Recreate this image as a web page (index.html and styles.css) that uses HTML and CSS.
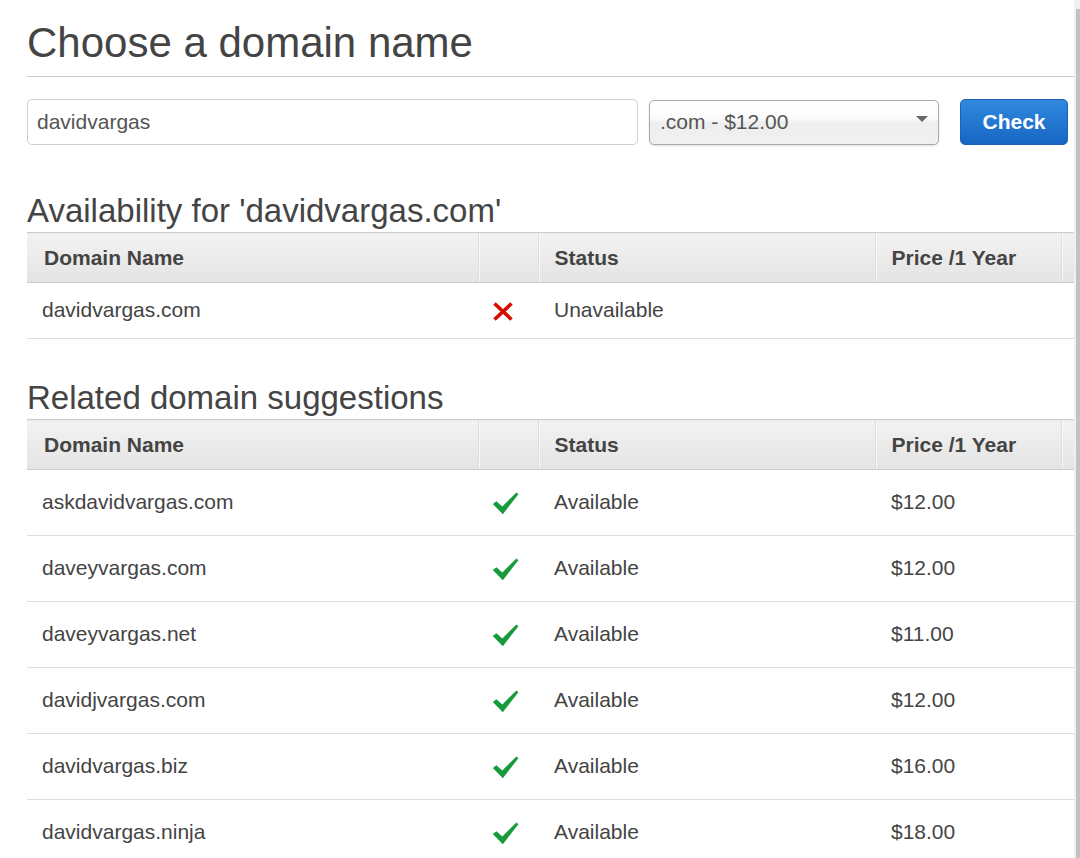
FILE: index.html
```html
<!DOCTYPE html>
<html lang="en">
<head>
<meta charset="utf-8">
<title>Choose a domain name</title>
<link rel="stylesheet" href="styles.css">
</head>
<body>
<div class="page">
  <main class="content">
    <h1 class="title">Choose a domain name</h1>

    <form class="search" onsubmit="return false">
      <input class="name-input" type="text" value="davidvargas">
      <div class="tld-select">
        <span class="tld-value">.com - $12.00</span>
        <span class="tld-arrow"></span>
      </div>
      <button class="check-btn" type="button">Check</button>
    </form>

    <h2 class="section-title">Availability for 'davidvargas.com'</h2>
    <table class="domains compact">
      <colgroup>
        <col class="c-name"><col class="c-icon"><col class="c-status"><col class="c-price"><col class="c-extra">
      </colgroup>
      <thead>
        <tr><th>Domain Name</th><th></th><th>Status</th><th>Price /1 Year</th><th></th></tr>
      </thead>
      <tbody>
        <tr>
          <td>davidvargas.com</td>
          <td class="icon-cell">
            <svg class="x-icon" width="22" height="21" viewBox="0 0 22 21"><path d="M2.5 2.5 L19.5 18.5 M19.5 2.5 L2.5 18.5" stroke="#d60b00" stroke-width="3.6" stroke-linecap="butt" fill="none"/></svg>
          </td>
          <td>Unavailable</td>
          <td></td>
          <td></td>
        </tr>
      </tbody>
    </table>

    <h2 class="section-title second">Related domain suggestions</h2>
    <table class="domains">
      <colgroup>
        <col class="c-name"><col class="c-icon"><col class="c-status"><col class="c-price"><col class="c-extra">
      </colgroup>
      <thead>
        <tr><th>Domain Name</th><th></th><th>Status</th><th>Price /1 Year</th><th></th></tr>
      </thead>
      <tbody>
        <tr><td>askdavidvargas.com</td><td class="icon-cell"><svg class="ok-icon" width="27" height="23" viewBox="0 0 27 23"><path d="M0.8 12 L4.4 9.2 L10.3 14.4 L24.4 0.6 L26.4 2.2 L10.8 22.2 Z" fill="#179a3c"/></svg></td><td>Available</td><td>$12.00</td><td></td></tr>
        <tr><td>daveyvargas.com</td><td class="icon-cell"><svg class="ok-icon" width="27" height="23" viewBox="0 0 27 23"><path d="M0.8 12 L4.4 9.2 L10.3 14.4 L24.4 0.6 L26.4 2.2 L10.8 22.2 Z" fill="#179a3c"/></svg></td><td>Available</td><td>$12.00</td><td></td></tr>
        <tr><td>daveyvargas.net</td><td class="icon-cell"><svg class="ok-icon" width="27" height="23" viewBox="0 0 27 23"><path d="M0.8 12 L4.4 9.2 L10.3 14.4 L24.4 0.6 L26.4 2.2 L10.8 22.2 Z" fill="#179a3c"/></svg></td><td>Available</td><td>$11.00</td><td></td></tr>
        <tr><td>davidjvargas.com</td><td class="icon-cell"><svg class="ok-icon" width="27" height="23" viewBox="0 0 27 23"><path d="M0.8 12 L4.4 9.2 L10.3 14.4 L24.4 0.6 L26.4 2.2 L10.8 22.2 Z" fill="#179a3c"/></svg></td><td>Available</td><td>$12.00</td><td></td></tr>
        <tr><td>davidvargas.biz</td><td class="icon-cell"><svg class="ok-icon" width="27" height="23" viewBox="0 0 27 23"><path d="M0.8 12 L4.4 9.2 L10.3 14.4 L24.4 0.6 L26.4 2.2 L10.8 22.2 Z" fill="#179a3c"/></svg></td><td>Available</td><td>$16.00</td><td></td></tr>
        <tr><td>davidvargas.ninja</td><td class="icon-cell"><svg class="ok-icon" width="27" height="23" viewBox="0 0 27 23"><path d="M0.8 12 L4.4 9.2 L10.3 14.4 L24.4 0.6 L26.4 2.2 L10.8 22.2 Z" fill="#179a3c"/></svg></td><td>Available</td><td>$18.00</td><td></td></tr>
      </tbody>
    </table>
  </main>
  <div class="scrollbar"><div class="scroll-thumb"></div></div>
</div>
</body>
</html>
```

FILE: styles.css
```css
html, body {
  margin: 0;
  padding: 0;
  height: 100%;
  overflow: hidden;
  background: #fff;
}

body {
  font-family: "Liberation Sans", Arial, sans-serif;
  color: #444;
}

.page {
  display: flex;
  height: 858px;
  padding-left: 27px;
}

.content {
  width: 1047px;
  flex: none;
}

.scrollbar {
  width: 4px;
  flex: none;
  background: #f0f0f0;
  padding-left: 2px;
  display: flex;
  flex-direction: column;
}

.scroll-thumb {
  margin-top: 9px;
  flex: 1;
  background: #c2c2c2;
}

.title {
  margin: 19px 0 0;
  font-size: 42px;
  line-height: 48px;
  font-weight: normal;
  color: #444;
  padding-bottom: 9px;
  border-bottom: 1px solid #cccccc;
}

.search {
  display: flex;
  align-items: center;
  margin: 22px 0 0;
  height: 46px;
}

.name-input {
  box-sizing: border-box;
  width: 611px;
  height: 46px;
  border: 1px solid #cfcfcf;
  border-radius: 5px;
  padding: 0 9px;
  font-family: inherit;
  font-size: 21px;
  color: #555;
  outline: none;
  background: #fff;
}

.tld-select {
  box-sizing: border-box;
  width: 290px;
  height: 45px;
  margin-left: 11px;
  border: 1px solid #a9a9a9;
  border-radius: 5px;
  background: linear-gradient(#ffffff 0%, #fbfbfb 40%, #eeeeee 52%, #f0f0f0 100%);
  box-shadow: 0 1px 2px rgba(0, 0, 0, 0.12);
  display: flex;
  align-items: center;
  justify-content: space-between;
  padding: 0 10px 0 10px;
}

.tld-value {
  font-size: 21px;
  color: #555;
}

.tld-arrow {
  width: 0;
  height: 0;
  border-left: 6px solid transparent;
  border-right: 6px solid transparent;
  border-top: 6px solid #666;
  margin-bottom: 6px;
}

.check-btn {
  box-sizing: border-box;
  width: 108px;
  height: 46px;
  margin-left: 21px;
  border: 1px solid #1b62b8;
  border-radius: 5px;
  background: linear-gradient(#3189df, #1666c3);
  color: #fff;
  font-family: inherit;
  font-size: 21px;
  font-weight: bold;
  padding: 0;
}

.section-title {
  margin: 47px 0 0;
  font-size: 33px;
  line-height: 38px;
  font-weight: normal;
  color: #444;
  height: 40px;
}

.section-title.second {
  margin-top: 40px;
}

.domains {
  width: 1047px;
  border-collapse: collapse;
  table-layout: fixed;
  font-size: 21px;
}

.c-name { width: 451px; }
.c-icon { width: 60px; }
.c-status { width: 337px; }
.c-price { width: 186px; }
.c-extra { width: 13px; }

.domains th {
  height: 49px;
  padding: 0 0 0 16px;
  text-align: left;
  font-weight: bold;
  color: #444;
  background: linear-gradient(#f2f2f2, #e4e4e4);
  border-top: 1px solid #cccccc;
  border-bottom: 1px solid #cccccc;
  box-shadow: inset 1px 0 0 #f8f8f8;
  border-left: 1px solid #dddddd;
}

.domains th:first-child {
  border-left: none;
  box-shadow: none;
  padding-left: 17px;
}

.domains td {
  height: 63px;
  padding: 0 0 2px 15px;
  color: #444;
  border-bottom: 1px solid #dddddd;
  white-space: nowrap;
}

.domains.compact td {
  height: 53px;
}

.domains td:nth-child(3),
.domains td:nth-child(4) {
  padding-left: 16px;
}

.domains td.icon-cell {
  padding: 0 0 0 14px;
  line-height: 0;
}

.x-icon {
  display: block;
  margin-top: 1px;
}

.ok-icon {
  display: block;
  margin-top: 1px;
}
```
